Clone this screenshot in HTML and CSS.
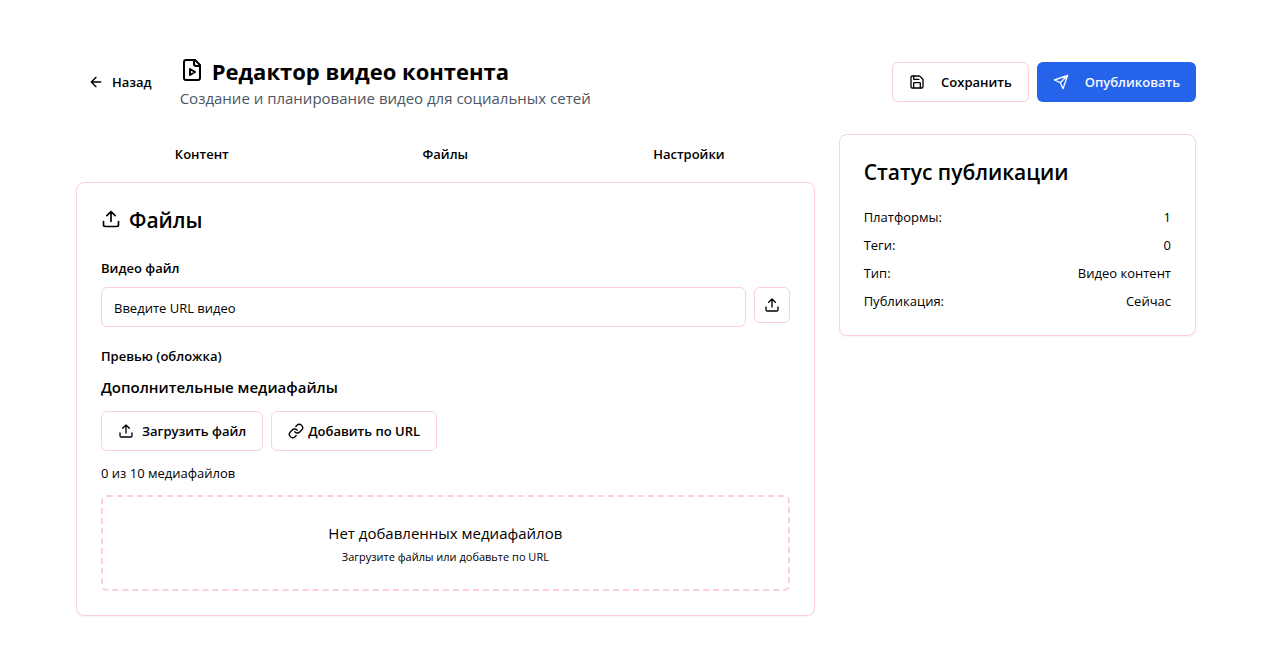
FILE: index.html
```html
<!DOCTYPE html>
<html lang="ru">
<head>
<meta charset="utf-8">
<meta name="viewport" content="width=device-width, initial-scale=1">
<title>Редактор видео контента</title>
<link rel="stylesheet" href="styles.css">
</head>
<body>
<svg class="sprite" aria-hidden="true">
  <symbol id="upload" viewBox="0 0 24 24"><path d="M12 3v12M17 8l-5-5-5 5M3 15v4a2 2 0 0 0 2 2h14a2 2 0 0 0 2-2v-4"/></symbol>
</svg>
<div class="page">
  <header class="header">
    <div class="heading">
      <button class="back" type="button">
        <svg class="icon" viewBox="0 0 24 24"><path d="m12 19-7-7 7-7M19 12H5"/></svg>Назад
      </button>
      <div>
        <h1 class="title"><svg class="icon icon-lg" viewBox="0 0 24 24"><path d="M15 2H6a2 2 0 0 0-2 2v16a2 2 0 0 0 2 2h12a2 2 0 0 0 2-2V7Z"/><path d="M14 2v4a2 2 0 0 0 2 2h4"/><path d="m10 11 5 3-5 3v-6Z"/></svg><span>Редактор видео контента</span></h1>
        <p class="subtitle">Создание и планирование видео для социальных сетей</p>
      </div>
    </div>
    <div class="actions">
      <button class="button wide" type="button"><svg class="icon" viewBox="0 0 24 24"><path d="M15.2 3a2 2 0 0 1 1.4.6l3.8 3.8a2 2 0 0 1 .6 1.4V19a2 2 0 0 1-2 2H5a2 2 0 0 1-2-2V5a2 2 0 0 1 2-2z"/><path d="M17 21v-7a1 1 0 0 0-1-1H8a1 1 0 0 0-1 1v7M7 3v4a1 1 0 0 0 1 1h7"/></svg>Сохранить</button>
      <button class="button wide primary" type="button"><svg class="icon" viewBox="0 0 24 24"><path d="m22 2-7 20-4-9-9-4ZM22 2 11 13"/></svg>Опубликовать</button>
    </div>
  </header>
  <main class="layout">
    <div class="editor">
      <div class="tabs" role="tablist">
        <button class="tab" type="button" role="tab" aria-selected="false">Контент</button>
        <button class="tab" type="button" role="tab" aria-selected="true">Файлы</button>
        <button class="tab" type="button" role="tab" aria-selected="false">Настройки</button>
      </div>
      <section class="card">
        <h2 class="card-title"><svg class="icon icon-md"><use href="#upload"/></svg>Файлы</h2>
        <label class="label" for="video-url">Видео файл</label>
        <div class="field-row">
          <input class="input" id="video-url" type="text" placeholder="Введите URL видео">
          <button class="button square" type="button" aria-label="Загрузить видео"><svg class="icon"><use href="#upload"/></svg></button>
        </div>
        <p class="label preview">Превью (обложка)</p>
        <h3 class="subhead">Дополнительные медиафайлы</h3>
        <div class="media-actions">
          <button class="button" type="button"><svg class="icon"><use href="#upload"/></svg>Загрузить файл</button>
          <button class="button snug" type="button"><svg class="icon" viewBox="0 0 24 24"><path d="M10 13a5 5 0 0 0 7.54.54l3-3a5 5 0 0 0-7.07-7.07l-1.72 1.71"/><path d="M14 11a5 5 0 0 0-7.54-.54l-3 3a5 5 0 0 0 7.07 7.07l1.71-1.71"/></svg>Добавить по URL</button>
        </div>
        <p class="count">0 из 10 медиафайлов</p>
        <div class="empty">
          <p class="empty-title">Нет добавленных медиафайлов</p>
          <p class="empty-hint">Загрузите файлы или добавьте по URL</p>
        </div>
      </section>
    </div>
    <aside class="card status">
      <h2 class="card-title">Статус публикации</h2>
      <dl class="facts">
        <div class="fact"><dt>Платформы:</dt><dd>1</dd></div>
        <div class="fact"><dt>Теги:</dt><dd>0</dd></div>
        <div class="fact"><dt>Тип:</dt><dd>Видео контент</dd></div>
        <div class="fact"><dt>Публикация:</dt><dd>Сейчас</dd></div>
      </dl>
    </aside>
  </main>
</div>
</body>
</html>
```
FILE: styles.css
```css
*, *::before, *::after { box-sizing: border-box; }
body, h1, h2, h3, p, dl, dd { margin: 0; }
body {
  background: #fff;
  color: #000;
  font-family: "Open Sans", "Noto Sans", sans-serif;
  font-size: 13px;
  line-height: 20px;
}
button, input { font: inherit; color: inherit; }
button { cursor: pointer; }
.sprite { display: none; }
.page { padding: 54px 91px 54px 76px; }
.icon {
  width: 16px;
  height: 16px;
  flex: none;
  fill: none;
  stroke: currentColor;
  stroke-width: 2;
  stroke-linecap: round;
  stroke-linejoin: round;
}
.icon-md { width: 20px; height: 20px; margin-bottom: 2px; }
.icon-lg { width: 24px; height: 24px; }
.header { display: flex; justify-content: space-between; align-items: center; margin-bottom: 24px; }
.heading, .actions { display: flex; align-items: center; }
.heading { gap: 16px; }
.actions { gap: 8px; }
.back {
  display: flex;
  align-items: center;
  gap: 8px;
  height: 36px;
  padding: 0 12px;
  border: 0;
  background: none;
  font-weight: 600;
}
.title { display: flex; gap: 8px; padding-top: 2px; font-size: 22px; line-height: 30px; font-weight: 700; }
.title .icon { margin-top: 2px; }
.subtitle { font-size: 15px; line-height: 24px; color: #4b5563; }
.button {
  display: flex;
  align-items: center;
  justify-content: center;
  gap: 8px;
  height: 40px;
  padding: 0 16px;
  border: 1px solid #fbcfdd;
  border-radius: 6px;
  background: #fff;
  font-weight: 600;
  white-space: nowrap;
}
.wide { gap: 16px; }
.snug { gap: 4px; }
.square { width: 36px; height: 36px; padding: 0; }
.primary { background: #2563eb; border: 0; color: #f8fafc; }
.layout { display: grid; grid-template-columns: repeat(3, minmax(0, 1fr)); gap: 24px; align-items: start; }
.editor { grid-column: span 2; }
.tabs { display: grid; grid-template-columns: repeat(3, 1fr); padding: 4px; margin-bottom: 8px; }
.tab { height: 32px; padding: 0 12px; border: 0; background: none; font-weight: 600; }
.card {
  padding: 24px;
  border: 1px solid #fbcfdd;
  border-radius: 8px;
  background: #fff;
  box-shadow: 0 1px 2px rgba(0, 0, 0, 0.05);
}
.card-title { display: flex; align-items: center; gap: 8px; margin-bottom: 24px; font-size: 21px; line-height: 26px; font-weight: 600; }
.label { display: block; line-height: 22px; font-weight: 600; }
.field-row { display: flex; gap: 8px; margin-top: 8px; }
.input {
  flex: 1;
  min-width: 0;
  height: 40px;
  padding: 2px 12px 0;
  border: 1px solid #fbcfdd;
  border-radius: 6px;
  background: #fff;
}
.input::placeholder { color: #000; opacity: 1; }
.preview { margin-top: 18px; }
.subhead { margin: 8px 0 12px; font-size: 15px; line-height: 24px; font-weight: 600; }
.media-actions { display: flex; gap: 8px; }
.count { margin: 12px 0; }
.empty { padding: 24px; border: 2px dashed #fbcfdd; border-radius: 6px; text-align: center; }
.empty-title { margin-bottom: 4px; font-size: 15px; line-height: 24px; }
.empty-hint { font-size: 11px; line-height: 16px; }
.status .card-title { margin-bottom: 22px; }
.facts { display: grid; gap: 8px; }
.fact { display: flex; justify-content: space-between; }
```
